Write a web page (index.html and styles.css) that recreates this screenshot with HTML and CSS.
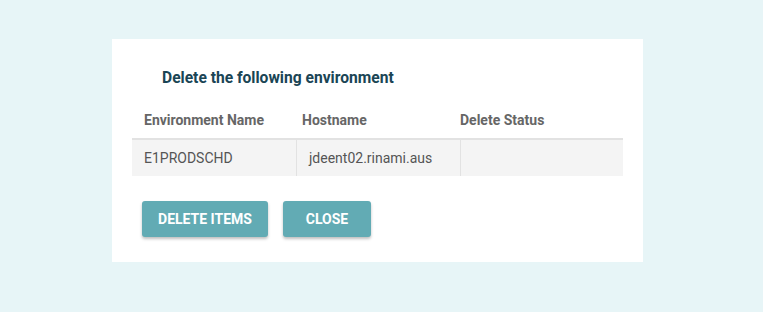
FILE: index.html
```html
<!DOCTYPE html>
<html lang="en">
  <head>
    <meta charset="UTF-8" />
    <title>Delete environment</title>
    <link rel="stylesheet" href="styles.css">
  </head>
  <body>
    <div class="dialog">
      <h2 class="dialog-title">Delete the following environment</h2>

      <div class="table">
        <div class="table-head">
          <div class="th">Environment Name</div>
          <div class="th">Hostname</div>
          <div class="th">Delete Status</div>
        </div>
        <div class="table-row">
          <div class="td">E1PRODSCHD</div>
          <div class="td">jdeent02.rinami.aus</div>
          <div class="td"></div>
        </div>
      </div>

      <div class="actions">
        <button class="btn">Delete Items</button>
        <button class="btn btn-close">Close</button>
      </div>
    </div>
  </body>
</html>
```

FILE: styles.css
```css
* {
  margin: 0;
  padding: 0;
  box-sizing: border-box;
}

body {
  font-family: Roboto, "Liberation Sans", sans-serif;
  background: #e7f5f7;
  min-height: 100vh;
  padding: 39px 0 0 112px;
  color: #555;
}

.dialog {
  width: 531px;
  height: 223px;
  background: #fff;
  padding: 30px 20px 0 20px;
}

.dialog-title {
  font-size: 15.6px;
  font-weight: 700;
  color: #1a4555;
  margin-left: 30px;
  line-height: 19px;
}

.table {
  margin-top: 14px;
}

.table-head {
  display: grid;
  grid-template-columns: 158px 158px 1fr;
  height: 38px;
  border-bottom: 2px solid #e2e2e2;
  align-items: center;
}

.th {
  font-size: 14px;
  font-weight: 700;
  color: #666;
  padding-left: 12px;
}

.table-row {
  display: grid;
  grid-template-columns: 165px 164px 1fr;
  height: 36px;
  background: #f4f4f4;
}

.td {
  font-size: 14px;
  color: #555;
  padding-left: 12px;
  display: flex;
  align-items: center;
  border-right: 1px solid #e2e2e2;
}

.td:last-child {
  border-right: none;
}

.actions {
  display: flex;
  gap: 15px;
  margin-top: 25px;
  padding-left: 10px;
}

.btn {
  height: 36px;
  width: 126px;
  background: #62abb4;
  color: #fff;
  border: none;
  border-radius: 3px;
  font-family: Roboto, "Liberation Sans", sans-serif;
  font-size: 14px;
  font-weight: 700;
  text-transform: uppercase;
  box-shadow: 0 2px 3px rgba(0, 0, 0, 0.25);
  cursor: pointer;
}

.btn-close {
  width: 88px;
}
```
